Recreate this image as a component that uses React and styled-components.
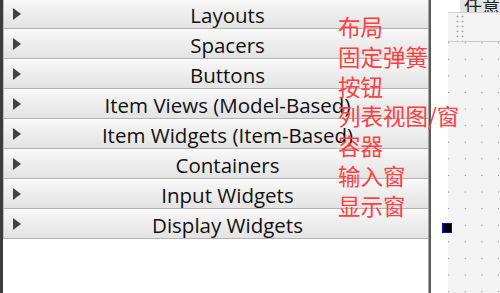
import React from "react";
import styled, { createGlobalStyle } from "styled-components";

const Global = createGlobalStyle`
  html, body { margin: 0; padding: 0; background: #fff; overflow: hidden; }
  #root { width: 500px; height: 293px; }
`;

const Shell = styled.div`
  position: relative;
  display: flex;
  width: 500px;
  height: 293px;
  overflow: hidden;
  background: #fff;
`;

const EdgeStrip = styled.div`
  width: 3px;
  flex: none;
  background: #3c3c3c;
`;

const Panel = styled.div`
  width: 425px;
  flex: none;
  display: flex;
  flex-direction: column;
  border-right: 1px solid #a8a8a8;
  background: #fff;
`;

const RowList = styled.div`
  display: flex;
  flex-direction: column;
  margin-top: -1px;
`;

const Row = styled.div`
  height: 29px;
  display: flex;
  align-items: center;
  border-left: 1px solid #bdbdbd;
  border-bottom: 1px solid #b4b4b4;
  background: linear-gradient(to bottom, #f9f9f9 0%, #efefef 40%, #e3e3e3 100%);
  box-shadow: inset 0 1px 0 #fdfdfd;
`;

const Arrow = styled.span`
  width: 0;
  height: 0;
  margin-left: 9px;
  margin-top: 1px;
  flex: none;
  border-top: 6.5px solid transparent;
  border-bottom: 6.5px solid transparent;
  border-left: 8px solid #424242;
`;

const Label = styled.span`
  flex: 1;
  text-align: center;
  padding-top: 3px;
  padding-left: 6px;
  font-family: "Open Sans", "Noto Sans", sans-serif;
  font-size: 20.5px;
  line-height: 26px;
  color: #111;
  white-space: nowrap;
`;

const Divider = styled.div`
  width: 2px;
  flex: none;
  background: #5a5a5a;
`;

const Gutter = styled.div`
  width: 17px;
  flex: none;
  background: #fff;
`;

const Canvas = styled.div`
  flex: 1;
  display: flex;
  flex-direction: column;
  background: #f3f3f3;
`;

const TabBar = styled.div`
  height: 12px;
  display: flex;
  align-items: flex-end;
  background: #fff;
  border-bottom: 1px solid #d0d0d0;
  overflow: hidden;
`;

const Tab = styled.div`
  margin-left: 12px;
  flex: 1;
  height: 12px;
  background: #e4e4e4;
  display: flex;
  align-items: flex-end;
  overflow: hidden;
`;

const TabText = styled.span`
  font-family: "Noto Sans CJK SC", sans-serif;
  font-size: 18px;
  line-height: 18px;
  margin-bottom: -2px;
  padding-left: 4px;
  color: #222;
`;

const Handle = styled.div`
  height: 28px;
  display: flex;
  border-bottom: 1px solid #c8c8c8;
`;

const HandleDots = styled.div`
  width: 10px;
  margin-left: 7px;
  background-image: radial-gradient(circle, #9a9a9a 0.8px, transparent 1.1px);
  background-size: 5px 5px;
  background-position: 0 1px;
`;

const Grid = styled.div`
  flex: 1;
  background-image: radial-gradient(circle, #8c8c8c 0.7px, transparent 1px);
  background-size: 16.6px 16.6px;
  background-position: -7.6px 9px;
`;

const Notes = styled.div`
  position: absolute;
  left: 338px;
  top: 12px;
  display: flex;
  flex-direction: column;
  font-family: "Noto Sans CJK SC", sans-serif;
  font-size: 22.5px;
  line-height: 29.8px;
  color: #ff4040;
  pointer-events: none;
`;

const Marker = styled.div`
  position: absolute;
  left: 442px;
  top: 223px;
  width: 8px;
  height: 8px;
  background: #000;
  border: 1px solid #0000ff;
`;

const groups = [
  "Layouts",
  "Spacers",
  "Buttons",
  "Item Views (Model-Based)",
  "Item Widgets (Item-Based)",
  "Containers",
  "Input Widgets",
  "Display Widgets",
];

const notes = ["布局", "固定弹簧", "按钮", "列表视图/窗", "容器", "输入窗", "显示窗"];

export default function App() {
  return (
    <>
      <Global />
      <Shell>
        <EdgeStrip />
        <Panel>
          <RowList>
            {groups.map((g) => (
              <Row key={g}>
                <Arrow />
                <Label>{g}</Label>
              </Row>
            ))}
          </RowList>
        </Panel>
        <Divider />
        <Gutter />
        <Canvas>
          <TabBar>
            <Tab>
              <TabText>任意</TabText>
            </Tab>
          </TabBar>
          <Handle>
            <HandleDots />
          </Handle>
          <Grid />
        </Canvas>
        <Notes>
          {notes.map((n) => (
            <span key={n}>{n}</span>
          ))}
        </Notes>
        <Marker />
      </Shell>
    </>
  );
}
